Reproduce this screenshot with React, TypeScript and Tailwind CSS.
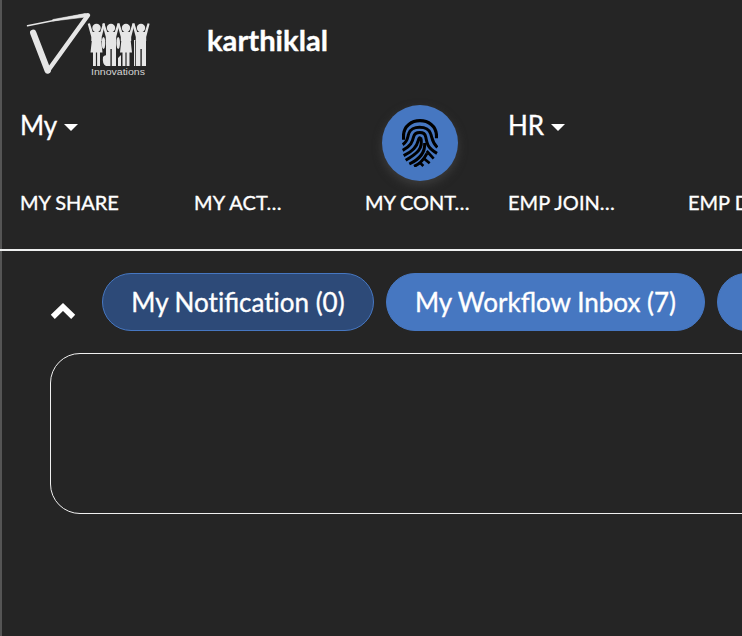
function Logo() {
  return (
    <svg width="130" height="70" viewBox="0 0 130 70" className="block shrink-0" aria-label="Innovations">
      <g stroke="#e6e6e6" fill="none" strokeLinecap="round">
        <path d="M2.5 15.8 L60 4.3" strokeWidth="1.4" />
        <path d="M28 9.5 L61 3.4 L64 4.5 L61 7 L28 11 Z" fill="#e6e6e6" strokeWidth=".6" />
        <path d="M8.2 22.8 L22.7 60.5" strokeWidth="6.3" />
        <path d="M63 5.2 L23 60.8" strokeWidth="4.4" />
      </g>
      <g fill="#e6e6e6">
        {[71.5, 86, 101, 116].map((x, i) => (
          <g key={x} transform={`translate(${x} 13)`}>
            <circle cx="0" cy="5" r="4.2" />
            <path d="M-8.8 .8 L-6.6 .3 L-3.8 9 H3.8 L6.6 .3 L8.6 .8 L5.2 14 V18 H-5.2 V14 Z" />
            {i % 2 === 0 ? (
              <path d="M-4.5 16 H4.5 L6 29.5 H3.5 V43 H.6 V29.5 H-.6 V43 H-3.5 V29.5 H-6 Z" />
            ) : (
              <path d="M-5 16 H5 V43 H.8 V26 H-.6 V43 H-5 Z" />
            )}
          </g>
        ))}
        <ellipse cx="78.5" cy="33" rx="1.8" ry="6" />
        <ellipse cx="93.2" cy="33" rx="1.8" ry="6" />
        <path d="M78 47 Q80 44 83 46 V56 H81 Q77 54 78 47Z M93 48 L96 45 V56 H93Z M109 30 H110.2 V56 H109Z" />
      </g>
      <text x="66" y="64.5" fill="#d4d4d4" fontSize="8.6" textLength="54" lengthAdjust="spacingAndGlyphs" className="font-['Liberation_Sans']">Innovations</text>
    </svg>
  );
}

function Fingerprint() {
  return (
    <svg width="36" height="48" viewBox="81 62 108 144" className="block" fill="none" stroke="#000" strokeWidth="9">
      <path d="M85.5 124 V112 C87 52 183 52 184.500 112 V120" strokeWidth="9.500" />
      <path d="M83 139 C99 129 97 118 101 106 C109 80 158 80 167 106 C172 119 170 131 187 147" />
      <path d="M83 156 C108 143 112 131 116 115 C120 98 149 98 152 115 C156 137 158 149 186 165" />
      <path d="M86 172 C115 157 125 145 130 126 Q134 111 138 126" />
      <path d="M137 118 C146 150 127 165 92 186" />
      <path d="M103 197 C135 182 151 162 149 134" />
      <path d="M117 204 C132 198 145 186 156 165" />
      <path d="M155 158 L176 181 M145 179 L164 195 M134 192 L145 203" strokeWidth="8" />
    </svg>
  );
}

function Caret() {
  return <span className="mt-1 border-x-[7px] border-t-[7px] border-x-transparent border-t-white" />;
}

function Heading({ children }: { children: string }) {
  return (
    <div className="flex h-10 items-center gap-[7px] text-[26px] leading-10">
      <span>{children}</span>
      <Caret />
    </div>
  );
}

const pill = "flex h-[58px] shrink-0 items-center justify-center rounded-[29px] border border-[#4677c1] text-[26px] whitespace-nowrap";

export default function App() {
  return (
    <div className="flex h-[636px] w-[742px] flex-col overflow-hidden bg-[#252525] font-[Lato,sans-serif] text-white [-webkit-text-stroke:0.35px_white]">
      <header className="flex h-[249px] shrink-0 flex-col border-l-2 border-[#555]">
        <div className="flex h-[105px] shrink-0 pt-[10px] pl-[23px]">
          <div className="[-webkit-text-stroke:0px]"><Logo /></div>
          <h1 className="ml-[52px] h-[60px] text-[29.2px] leading-[60px] font-bold">karthiklal</h1>
        </div>
        <div className="flex text-[20px] whitespace-nowrap">
          <section className="w-[488px] shrink-0 pl-[18px]">
            <div className="flex h-[76px]">
              <div className="w-[362px]"><Heading>My</Heading></div>
              <div className="flex size-[76px] items-center justify-center rounded-full bg-[#4677c1] shadow-[0_4px_10px_#3c3c3c]"><Fingerprint /></div>
            </div>
            <div className="mt-[5px] flex h-8 items-center">
              <span className="w-[174px] tracking-[-0.05px]">MY SHARE</span>
              <span className="w-[171px] tracking-[0.15px]">MY ACT…</span>
              <span className="tracking-[-0.1px]">MY CONT…</span>
            </div>
          </section>
          <section className="w-[380px] shrink-0 pl-[18px]">
            <div className="h-[76px]"><Heading>HR</Heading></div>
            <div className="mt-[5px] flex h-8 items-center">
              <span className="w-[180px] tracking-[0.05px]">EMP JOIN…</span>
              <span>EMP D…</span>
            </div>
          </section>
        </div>
      </header>
      <div className="h-[2px] shrink-0 bg-[#eef0f0]" />
      <main className="flex flex-1 flex-col border-l-2 border-[#555] pt-[22px]">
        <div className="flex shrink-0">
          <div className="w-[100px] shrink-0 pt-[29px] pl-[48px]">
            <svg width="26" height="18" viewBox="0 0 26 18" fill="none" stroke="white" strokeWidth="5.8"><path d="M2.8 14.8 L13 5 L23.2 14.8" /></svg>
          </div>
          <div className="flex gap-3">
            <button className={`${pill} w-[272px] bg-[#2d4a78]`}><span>My Not<span className="inline-block">ificat</span><span className="inline-block">ion (0)</span></span></button>
            <button className={`${pill} w-[319px] bg-[#4677c1]`}>My Workflow Inbox (7)</button>
            <button className={`${pill} w-[272px] bg-[#4677c1]`} />
          </div>
        </div>
        <div className="mt-[22px] ml-[48px] h-[161px] w-[900px] shrink-0 rounded-[30px] border border-[#f0f0f0]" />
      </main>
    </div>
  );
}
